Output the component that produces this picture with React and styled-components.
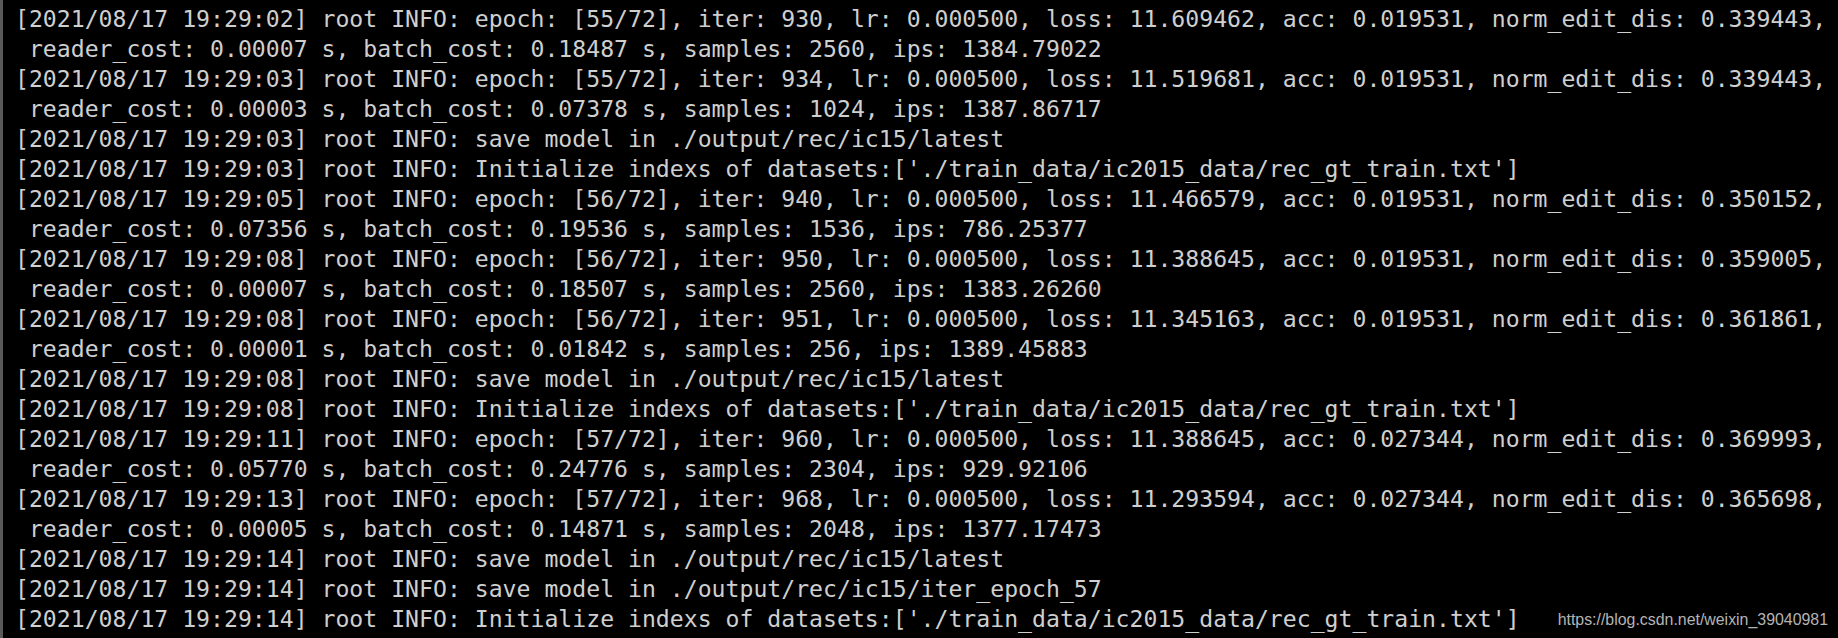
import React from 'react'
import styled, { createGlobalStyle } from "styled-components";

const Global = createGlobalStyle`
    html, body {
        margin: 0;
        padding: 0;
        background: #000;
    }
`

const Screen = styled.div`
    position: relative;
    width: 1838px;
    height: 638px;
    box-sizing: border-box;
    background: #000;
    border-left: 3px solid #5a5a5a;
    padding: 4px 0 0 12px;
    overflow: hidden;
`

const Line = styled.div`
    font-family: "DejaVu Sans Mono", "Liberation Mono", monospace;
    font-size: 23.15px;
    line-height: 30px;
    height: 30px;
    color: #cfcfcf;
    white-space: pre;
`

const Watermark = styled.span`
    position: absolute;
    right: 10px;
    bottom: 9px;
    font-family: "Liberation Sans", Arial, sans-serif;
    font-size: 15.9px;
    color: #b4b4b4;
`

const log = [
    "[2021/08/17 19:29:02] root INFO: epoch: [55/72], iter: 930, lr: 0.000500, loss: 11.609462, acc: 0.019531, norm_edit_dis: 0.339443,",
    " reader_cost: 0.00007 s, batch_cost: 0.18487 s, samples: 2560, ips: 1384.79022",
    "[2021/08/17 19:29:03] root INFO: epoch: [55/72], iter: 934, lr: 0.000500, loss: 11.519681, acc: 0.019531, norm_edit_dis: 0.339443,",
    " reader_cost: 0.00003 s, batch_cost: 0.07378 s, samples: 1024, ips: 1387.86717",
    "[2021/08/17 19:29:03] root INFO: save model in ./output/rec/ic15/latest",
    "[2021/08/17 19:29:03] root INFO: Initialize indexs of datasets:['./train_data/ic2015_data/rec_gt_train.txt']",
    "[2021/08/17 19:29:05] root INFO: epoch: [56/72], iter: 940, lr: 0.000500, loss: 11.466579, acc: 0.019531, norm_edit_dis: 0.350152,",
    " reader_cost: 0.07356 s, batch_cost: 0.19536 s, samples: 1536, ips: 786.25377",
    "[2021/08/17 19:29:08] root INFO: epoch: [56/72], iter: 950, lr: 0.000500, loss: 11.388645, acc: 0.019531, norm_edit_dis: 0.359005,",
    " reader_cost: 0.00007 s, batch_cost: 0.18507 s, samples: 2560, ips: 1383.26260",
    "[2021/08/17 19:29:08] root INFO: epoch: [56/72], iter: 951, lr: 0.000500, loss: 11.345163, acc: 0.019531, norm_edit_dis: 0.361861,",
    " reader_cost: 0.00001 s, batch_cost: 0.01842 s, samples: 256, ips: 1389.45883",
    "[2021/08/17 19:29:08] root INFO: save model in ./output/rec/ic15/latest",
    "[2021/08/17 19:29:08] root INFO: Initialize indexs of datasets:['./train_data/ic2015_data/rec_gt_train.txt']",
    "[2021/08/17 19:29:11] root INFO: epoch: [57/72], iter: 960, lr: 0.000500, loss: 11.388645, acc: 0.027344, norm_edit_dis: 0.369993,",
    " reader_cost: 0.05770 s, batch_cost: 0.24776 s, samples: 2304, ips: 929.92106",
    "[2021/08/17 19:29:13] root INFO: epoch: [57/72], iter: 968, lr: 0.000500, loss: 11.293594, acc: 0.027344, norm_edit_dis: 0.365698,",
    " reader_cost: 0.00005 s, batch_cost: 0.14871 s, samples: 2048, ips: 1377.17473",
    "[2021/08/17 19:29:14] root INFO: save model in ./output/rec/ic15/latest",
    "[2021/08/17 19:29:14] root INFO: save model in ./output/rec/ic15/iter_epoch_57",
    "[2021/08/17 19:29:14] root INFO: Initialize indexs of datasets:['./train_data/ic2015_data/rec_gt_train.txt']",
]

const App = () => {
    return (
        <>
            <Global />
            <Screen>
                {log.map((text, i) => (
                    <Line key={i}>{text}</Line>
                ))}
                <Watermark>https://blog.csdn.net/weixin_39040981</Watermark>
            </Screen>
        </>
    );
}

export default App;
